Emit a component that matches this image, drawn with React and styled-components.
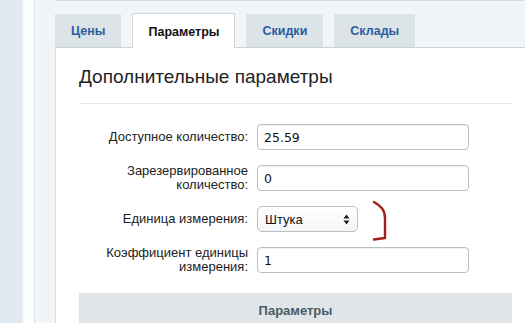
import React from 'react';
import styled, { createGlobalStyle } from 'styled-components';

const Global = createGlobalStyle`
  html, body {
    margin: 0;
    padding: 0;
    width: 525px;
    height: 323px;
    overflow: hidden;
    background: #f1f5f7;
    font-family: "Liberation Sans", Arial, sans-serif;
  }
`;

const Page = styled.div`
  display: flex;
  height: 323px;
`;

const Sidebar = styled.div`
  width: 22px;
  flex: none;
  background: #e1e8ef;
  border-right: 2px solid #f2f5f8;
`;

const Gutter = styled.div`
  width: 10px;
  flex: none;
  background: #fdfefe;
  border-right: 1px solid #dde3e7;
`;

const Main = styled.div`
  flex: 1;
  padding-left: 20px;
  display: flex;
  flex-direction: column;
  min-width: 0;
`;

const TopCard = styled.div`
  height: 2px;
  background: #fafbfb;
  border-bottom: 1px solid #d9dee0;
`;

const Tabs = styled.div`
  display: flex;
  align-items: flex-end;
  gap: 11px;
  margin-top: 12px;
  position: relative;
  z-index: 1;
`;

const Tab = styled.div`
  height: ${p => (p.active ? '35px' : '33px')};
  box-sizing: border-box;
  padding: 0 15px;
  display: flex;
  align-items: center;
  font-size: 12.5px;
  font-weight: bold;
  color: ${p => (p.active ? '#111' : '#2b5da3')};
  background: ${p => (p.active ? '#fff' : '#dde4e7')};
  border: 1px solid ${p => (p.active ? '#cfd7da' : '#dde4e7')};
  border-bottom: none;
  margin-bottom: ${p => (p.active ? '-1px' : '0')};
  padding-top: ${p => (p.active ? '2px' : '0')};
`;

const Panel = styled.div`
  flex: 1;
  background: #fff;
  border-top: 1px solid #c9d3d7;
  border-left: 1px solid #d5dde0;
  padding: 18px 13px 0 23px;
`;

const Heading = styled.h2`
  margin: 0;
  font-size: 19px;
  font-weight: normal;
  color: #222;
  line-height: 22px;
  padding-bottom: 15px;
  border-bottom: 1px solid #e3e8ea;
`;

const Form = styled.div`
  display: grid;
  grid-template-columns: 169px 1fr;
  column-gap: 9px;
  row-gap: 14px;
  align-items: center;
  padding-top: 20px;
`;

const Label = styled.label`
  text-align: right;
  font-size: 13px;
  line-height: 14px;
  color: #222;
`;

const Field = styled.div`
  position: relative;
  display: flex;
  align-items: center;
`;

const Input = styled.input`
  box-sizing: border-box;
  width: 212px;
  height: 26px;
  border: 1px solid #b7c0c5;
  border-radius: 4px;
  padding: 0 6px;
  font-family: "DejaVu Sans", Verdana, sans-serif;
  font-size: 12.5px;
  color: #111;
  box-shadow: inset 0 1px 1px rgba(0, 0, 0, 0.06);
  outline: none;
`;

const Select = styled.div`
  box-sizing: border-box;
  width: 101px;
  height: 26px;
  border: 1px solid #b7c0c5;
  border-radius: 5px;
  padding: 0 7px;
  display: flex;
  align-items: center;
  justify-content: space-between;
  font-size: 13px;
  color: #111;
  background: linear-gradient(#ffffff, #f4f5f6);
`;

const Arrows = styled.svg`
  width: 7px;
  height: 11px;
`;

const Bracket = styled.svg`
  position: absolute;
  left: 112px;
  top: -6px;
  width: 22px;
  height: 44px;
  overflow: visible;
`;

const Section = styled.div`
  margin-top: 19px;
  height: 34px;
  background: #dfe5e8;
  display: flex;
  align-items: center;
  justify-content: center;
  font-size: 13px;
  font-weight: bold;
  color: #4c5b64;
`;

export default function App() {
  return (
    <Page>
      <Global />
      <Sidebar />
      <Gutter />
      <Main>
        <TopCard />
        <Tabs>
          <Tab>Цены</Tab>
          <Tab active>Параметры</Tab>
          <Tab>Скидки</Tab>
          <Tab>Склады</Tab>
        </Tabs>
        <Panel>
          <Heading>Дополнительные параметры</Heading>
          <Form>
            <Label>Доступное количество:</Label>
            <Field><Input defaultValue="25.59" /></Field>

            <Label>Зарезервированное<br />количество:</Label>
            <Field><Input defaultValue="0" /></Field>

            <Label>Единица измерения:</Label>
            <Field>
              <Select>
                <span>Штука</span>
                <Arrows viewBox="0 0 7 11">
                  <path d="M3.5 0.5 L6.5 4.5 L0.5 4.5 Z" fill="#222" />
                  <path d="M3.5 10.5 L6.5 6.5 L0.5 6.5 Z" fill="#222" />
                </Arrows>
              </Select>
              <Bracket viewBox="0 0 22 44">
                <path
                  d="M5 2 C 12 6, 16 10, 16 18 L16 38 L5 39.5"
                  fill="none"
                  stroke="#a61d1a"
                  strokeWidth="2.4"
                  strokeLinecap="round"
                  strokeLinejoin="round"
                />
              </Bracket>
            </Field>

            <Label>Коэффициент единицы<br />измерения:</Label>
            <Field><Input defaultValue="1" /></Field>
          </Form>
          <Section>Параметры</Section>
        </Panel>
      </Main>
    </Page>
  );
}
